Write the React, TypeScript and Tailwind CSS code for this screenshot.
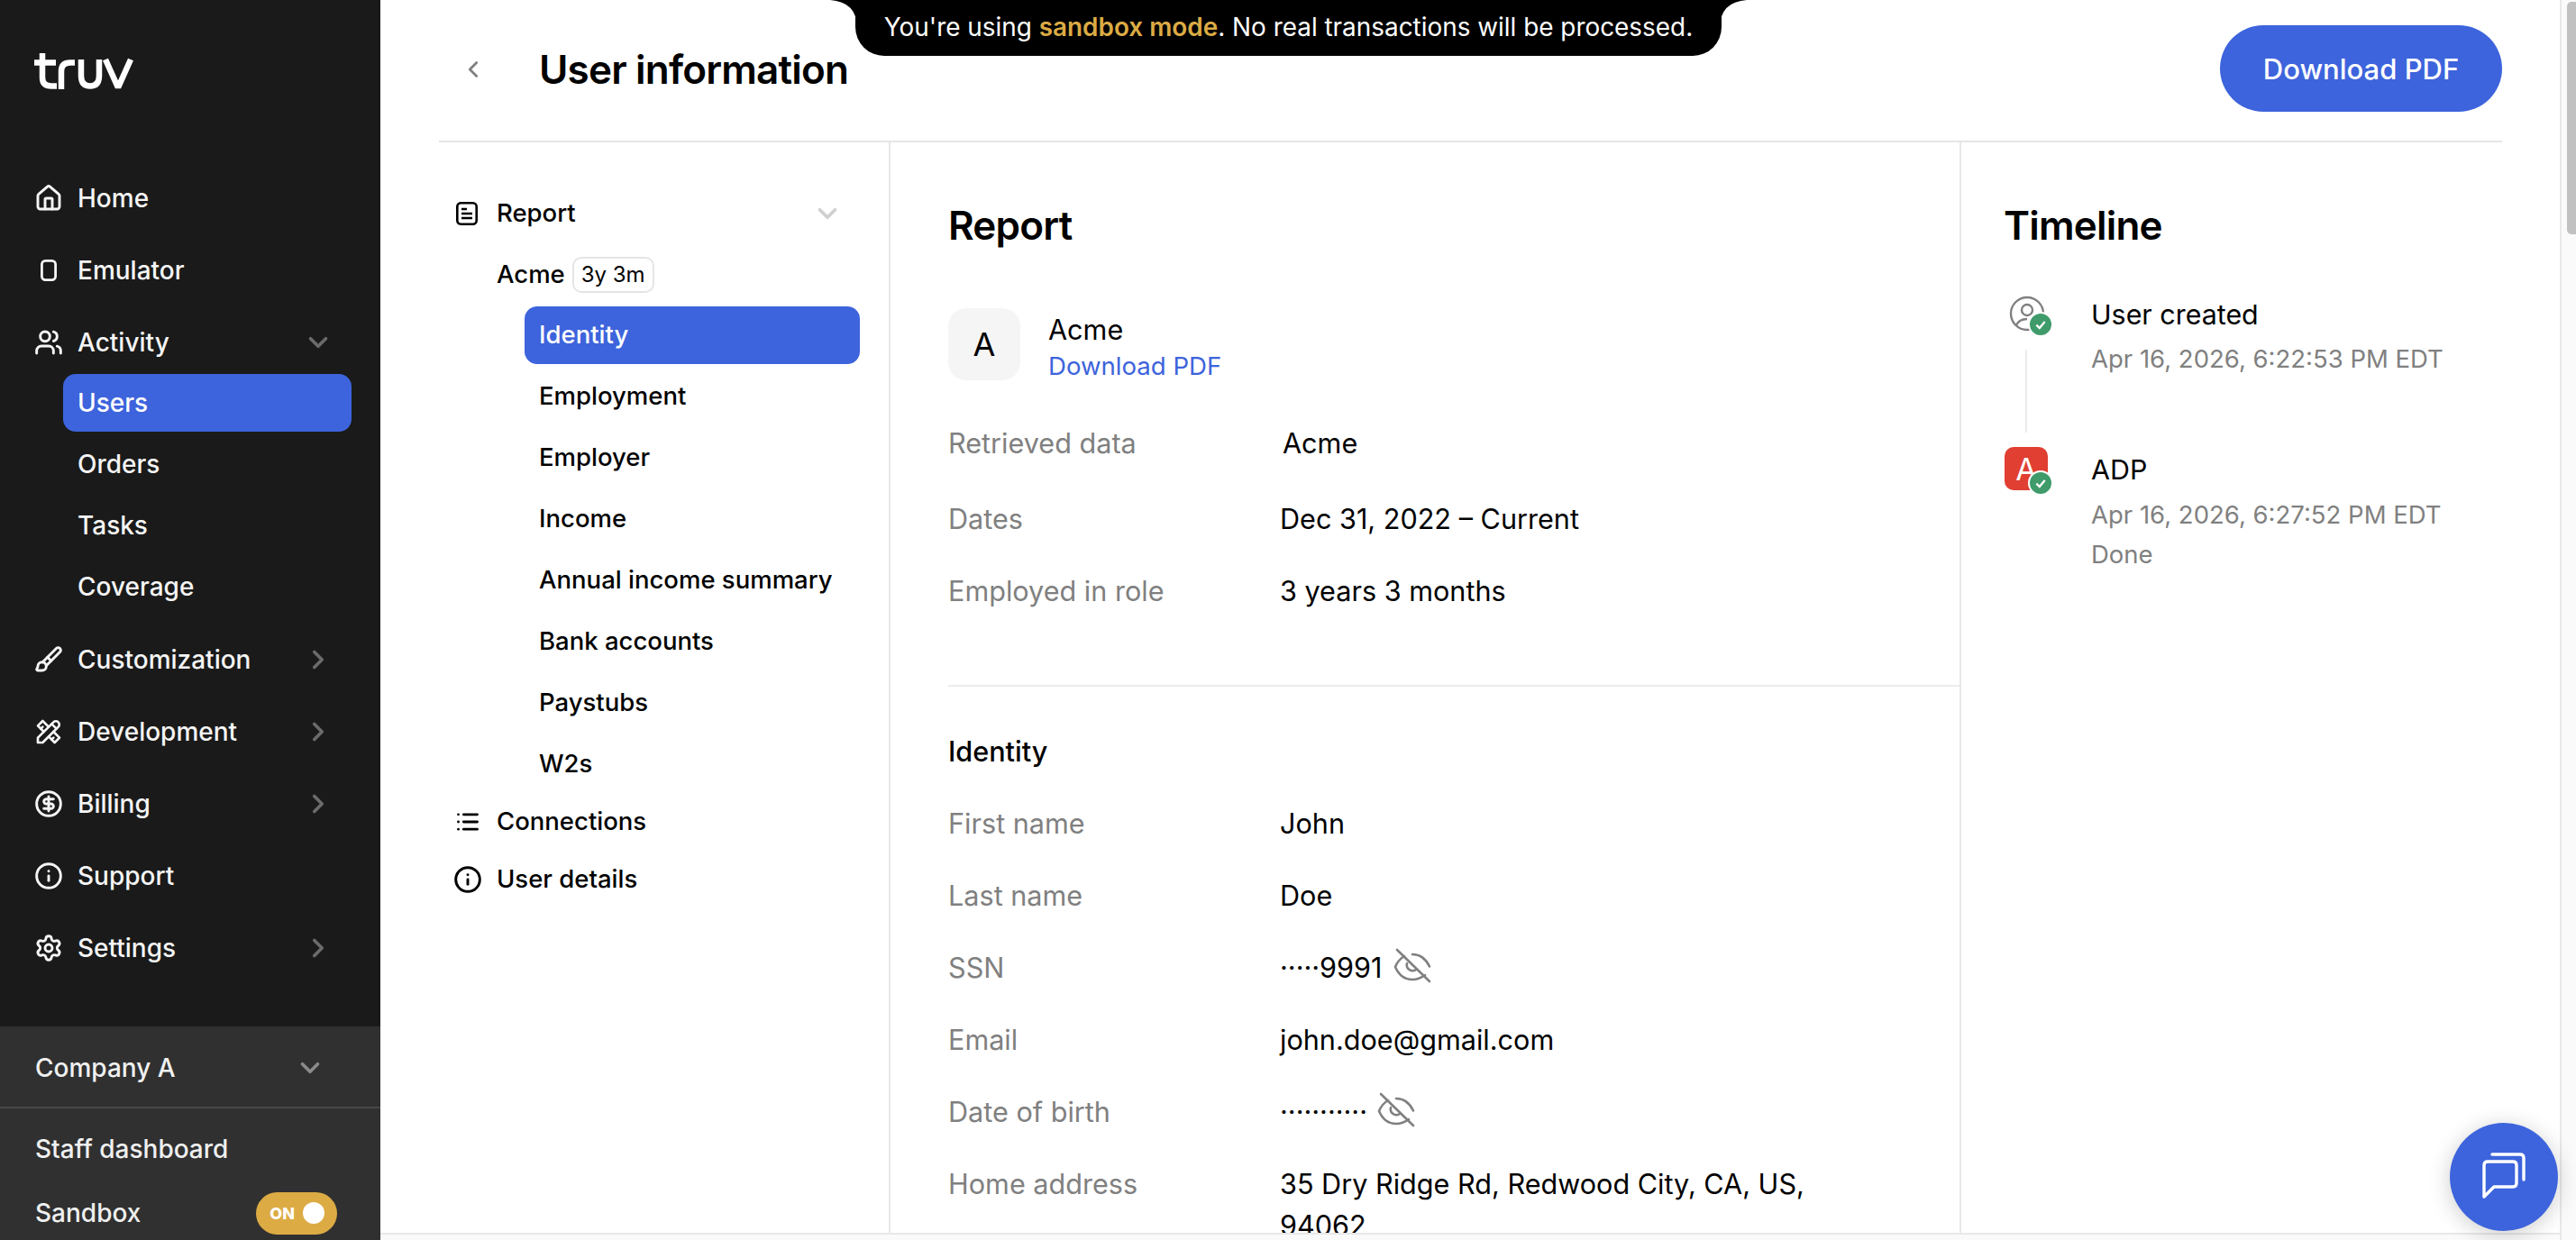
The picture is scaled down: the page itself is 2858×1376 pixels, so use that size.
import { Brush, ChevronDown, ChevronLeft, ChevronRight, CircleDollarSign, Home, Info, List, Settings, Users } from "lucide-react";
import { TbTools } from "react-icons/tb";
import type { ReactNode } from "react";

function Logo() {
  return (
    <svg viewBox="0 0 110 40" className="h-[40px] w-[110px]" fill="none" stroke="white" strokeWidth="6.5">
      <path d="M0 10.5H24M9 0V27q0 9.5 10 9.5h6" />
      <path d="M30 40V20q0-9.5 10-9.5h5" />
      <path d="M52 7V25q0 11.5 10 11.5t10-11.5V7" />
      <path d="M79 7l13 29h2l13-29" />
    </svg>
  );
}

function EyeSlash({ className = "" }: { className?: string }) {
  return (
    <svg viewBox="0 0 60 50" className={`h-[50px] w-[60px] shrink-0 ${className}`} fill="none" stroke="#808080" strokeWidth="2.6" strokeLinecap="round">
      <path d="M29 10C37 10 44 15 48 23.5" />
      <path d="M20 12C15 15 12 19 10 24C14 33 21 38 29 38C34 38 39 36 43 33" />
      <path d="M23 20A6.5 6.5 0 0 0 33 27" />
      <path d="M12 5L48 40" />
    </svg>
  );
}

function NavRow({ icon, label, chevron }: { icon: ReactNode; label: string; chevron?: "down" | "right" }) {
  return (
    <div className="flex h-[80px] items-center pl-[38px] pr-[52px] text-[28px] font-medium text-[#f5f5f5]">
      <span className="flex w-[32px] shrink-0 justify-center">{icon}</span>
      <span className="ml-[16px] flex-1">{label}</span>
      {chevron === "down" && <ChevronDown size={34} strokeWidth={2.6} className="text-[#6b6b6b]" />}
      {chevron === "right" && <ChevronRight size={34} strokeWidth={2.6} className="text-[#6b6b6b]" />}
    </div>
  );
}

function Sidebar() {
  const ic = { size: 32, strokeWidth: 2.2 };
  return (
    <aside className="flex h-full w-[422px] shrink-0 flex-col bg-[#1a1a1a]">
      <div className="pl-[38px] pt-[59px]">
        <Logo />
      </div>
      <nav className="mt-[81px] flex-1">
        <NavRow icon={<Home {...ic} />} label="Home" />
        <NavRow
          icon={
            <svg viewBox="0 0 18 24" className="h-[24px] w-[18px]" fill="none" stroke="currentColor" strokeWidth="2.8">
              <rect x="1.4" y="1.4" width="15.2" height="21.2" rx="4" />
            </svg>
          }
          label="Emulator"
        />
        <NavRow icon={<Users {...ic} />} label="Activity" chevron="down" />
        <div className="-mt-[5px] mb-[9px] flex flex-col gap-[4px] pl-[70px] pr-[32px]">
          {["Users", "Orders", "Tasks", "Coverage"].map((item) => (
            <div
              key={item}
              className={`flex h-[64px] items-center rounded-[14px] pl-[16px] text-[28px] font-medium ${
                item === "Users" ? "bg-[#3d64dc] text-white" : "text-[#f5f5f5]"
              }`}
            >
              {item}
            </div>
          ))}
        </div>
        <NavRow icon={<Brush {...ic} />} label="Customization" chevron="right" />
        <NavRow icon={<TbTools size={32} />} label="Development" chevron="right" />
        <NavRow icon={<CircleDollarSign {...ic} />} label="Billing" chevron="right" />
        <NavRow icon={<Info {...ic} />} label="Support" />
        <NavRow icon={<Settings {...ic} />} label="Settings" chevron="right" />
      </nav>
      <div className="h-[237px] bg-[#303030] text-[28px] font-medium text-[#f0f0f0]">
        <div className="flex h-[91px] items-center justify-between border-b-2 border-[#484848] pl-[39px] pr-[61px] pt-[2px]">
          <span>Company A</span>
          <ChevronDown size={34} strokeWidth={2.6} className="text-[#8a8a8a]" />
        </div>
        <div className="flex h-[90px] items-center pl-[39px]">Staff dashboard</div>
        <div className="-mt-[10px] flex h-[72px] items-center justify-between pl-[39px] pr-[48px]">
          <span>Sandbox</span>
          <span className="flex h-[47px] w-[90px] items-center justify-end gap-[9px] rounded-full bg-[#dcab44] pr-[14px]">
            <span className="text-[18px] font-extrabold text-white">ON</span>
            <span className="h-[24px] w-[24px] rounded-full bg-white" />
          </span>
        </div>
      </div>
    </aside>
  );
}

function Banner() {
  return (
    <div className="absolute left-[527px] top-0 flex h-[62px] w-[961px] items-center justify-center rounded-b-[32px] bg-black text-[27.9px] text-white">
      <svg viewBox="0 0 30 30" className="absolute -left-[28px] top-0 h-[30px] w-[30px]" fill="black">
        <path d="M0 0H30V30Q29 2 0 0Z" />
      </svg>
      <svg viewBox="0 0 30 30" className="absolute -right-[28px] top-0 h-[30px] w-[30px]" fill="black">
        <path d="M30 0H0V30Q1 2 30 0Z" />
      </svg>
      <span>
        You're using <span className="font-semibold text-[#dcab44]">sandbox mode</span>. No real transactions will be processed.
      </span>
    </div>
  );
}

function LeftMenu() {
  const subItems = ["Identity", "Employment", "Employer", "Income", "Annual income summary", "Bank accounts", "Paystubs", "W2s"];
  return (
    <div className="w-[501px] shrink-0 border-r-2 border-[#e8e8e8] pt-[45px] text-[27.5px] font-medium text-black">
      <div className="flex h-[68px] items-center pl-[19px] pr-[51px]">
        <svg viewBox="0 0 24 26" className="h-[26px] w-[24px]" fill="none" stroke="black" strokeWidth="2.6">
          <rect x="1.3" y="1.3" width="21.4" height="23.4" rx="4" />
          <path d="M6 8h6M6 13h12M6 18h12" />
        </svg>
        <span className="ml-[21px] flex-1">Report</span>
        <ChevronDown size={34} strokeWidth={2.6} className="text-[#d0d0d0]" />
      </div>
      <div className="flex h-[68px] items-center pl-[64px]">
        Acme
        <span className="ml-[8px] flex h-[40px] items-center rounded-[10px] border-2 border-[#e5e5e5] px-[8px] text-[24px] font-normal">3y 3m</span>
      </div>
      <div className="flex flex-col gap-[4px] pt-[1px]">
        {subItems.map((item) => (
          <div
            key={item}
            className={`ml-[95px] mr-[32px] flex h-[64px] items-center rounded-[14px] pl-[16px] ${
              item === "Identity" ? "bg-[#3d64dc] text-white" : ""
            }`}
          >
            {item}
          </div>
        ))}
      </div>
      <div className="flex h-[64px] items-center pl-[18px]">
        <List size={28} strokeWidth={2.4} />
        <span className="ml-[18px]">Connections</span>
      </div>
      <div className="flex h-[64px] items-center pl-[16px]">
        <Info size={32} strokeWidth={2.2} />
        <span className="ml-[16px]">User details</span>
      </div>
    </div>
  );
}

function Row({ label, children, className = "" }: { label: string; children: ReactNode; className?: string }) {
  return (
    <div className={`flex h-[80px] items-center text-[30.6px] ${className}`}>
      <span className="w-[368px] shrink-0 text-[#808080]">{label}</span>
      {children}
    </div>
  );
}

function ReportPanel() {
  return (
    <div className="min-w-0 flex-1 border-r-2 border-[#e8e8e8] pl-[64px] pt-[62px] text-black">
      <h2 className="flex h-[60px] items-center text-[44px] font-semibold tracking-[-0.8px]">Report</h2>
      <div className="mt-[62px] flex h-[80px] items-start gap-[31px]">
        <div className="flex h-[80px] w-[80px] items-center justify-center rounded-[20px] bg-[#f5f5f5] text-[36px]">A</div>
        <div className="pt-[3px]">
          <div className="text-[30.6px] leading-[41px]">Acme</div>
          <div className="text-[27.6px] leading-[41px] text-[#3d64dc]">Download PDF</div>
        </div>
      </div>
      <Row label="Retrieved data" className="mt-[30px]">
        <span className="pl-[3px]">Acme</span>
      </Row>
      <Row label="Dates" className="mt-[4px]">
        <span>Dec 31, 2022 – Current</span>
      </Row>
      <Row label="Employed in role">
        <span>3 years 3 months</span>
      </Row>
      <div className="mt-[64px] h-[2px] bg-[#ececec]" />
      <div className="mt-[52px] flex h-[40px] items-center text-[30.6px] font-medium">Identity</div>
      <Row label="First name" className="mt-[20px]">
        <span>John</span>
      </Row>
      <Row label="Last name">
        <span>Doe</span>
      </Row>
      <Row label="SSN">
        <span>·····9991</span>
        <EyeSlash className="ml-[5px]" />
      </Row>
      <Row label="Email">
        <span>john.doe@gmail.com</span>
      </Row>
      <Row label="Date of birth">
        <span>···········</span>
        <EyeSlash className="ml-[3px]" />
      </Row>
      <div className="flex pt-[17px] text-[30.6px] leading-[46px]">
        <span className="w-[368px] shrink-0 text-[#808080]">Home address</span>
        <span className="w-[640px]">35 Dry Ridge Rd, Redwood City, CA, US, 94062</span>
      </div>
    </div>
  );
}

function Badge({ className }: { className: string }) {
  return (
    <span className={`absolute flex h-[28px] w-[28px] items-center justify-center rounded-full border-2 border-white bg-[#3f9b6a] ${className}`}>
      <svg viewBox="0 0 12 12" className="h-[14px] w-[14px]" fill="none" stroke="white" strokeWidth="2">
        <path d="M2 6.5l3 3 5-6" />
      </svg>
    </span>
  );
}

function Timeline() {
  return (
    <div className="w-[600px] shrink-0 pl-[48px] pt-[62px] text-black">
      <h2 className="-ml-[1px] flex h-[60px] items-center text-[44px] font-semibold tracking-[-0.8px]">Timeline</h2>
      <div className="relative mt-[46px]">
        <div className="absolute left-[23px] top-[62px] h-[92px] w-[2px] bg-[#ececec]" />
        <div className="flex">
          <div className="relative h-[48px] w-[48px]">
            <svg viewBox="0 0 40 40" className="ml-[5px] mt-[2px] h-[40px] w-[40px]" fill="none" stroke="#808080" strokeWidth="2.4">
              <circle cx="20" cy="20" r="18" />
              <circle cx="20" cy="16" r="6" />
              <path d="M8 33q3-7 12-7" />
            </svg>
            <Badge className="left-[26px] top-[20px]" />
          </div>
          <div className="ml-[48px] pt-[2px]">
            <div className="text-[30.4px] leading-[42px]">User created</div>
            <div className="mt-[7px] text-[27.5px] leading-[42px] text-[#808080]">Apr 16, 2026, 6:22:53 PM EDT</div>
          </div>
        </div>
        <div className="mt-[77px] flex">
          <div className="relative flex h-[48px] w-[48px] items-center justify-center rounded-[10px] bg-[#e03f32] text-[34px] text-white">
            A
            <Badge className="left-[26px] top-[26px]" />
          </div>
          <div className="ml-[48px]">
            <div className="text-[30.4px] leading-[50px]">ADP</div>
            <div className="mt-[3px] text-[27.5px] leading-[44px] text-[#808080]">Apr 16, 2026, 6:27:52 PM EDT</div>
            <div className="text-[27.5px] leading-[44px] text-[#808080]">Done</div>
          </div>
        </div>
      </div>
    </div>
  );
}

export default function App() {
  return (
    <div className="flex h-[1376px] w-[2858px] overflow-hidden bg-white font-['Inter',sans-serif]">
      <Sidebar />
      <div className="relative flex min-w-0 flex-1">
        <div className="flex min-w-0 flex-1 flex-col">
          <main className="flex min-h-0 flex-1 flex-col overflow-hidden pl-[65px] pr-[64px]">
            <header className="flex h-[158px] shrink-0 items-center justify-between border-b-2 border-[#e5e5e5] pb-[4px]">
              <div className="flex items-center pt-[2px]">
                <ChevronLeft size={30} strokeWidth={2.2} className="ml-[23px] text-[#808080]" />
                <h1 className="ml-[58px] text-[44px] font-semibold tracking-[-0.8px] text-black">User information</h1>
              </div>
              <button className="flex h-[96px] w-[313px] items-center justify-center rounded-full bg-[#3d64dc] pt-[2px] text-[31px] font-medium text-white">
                Download PDF
              </button>
            </header>
            <div className="flex min-h-0 flex-1">
              <LeftMenu />
              <ReportPanel />
              <Timeline />
            </div>
          </main>
          <div className="h-[8px] shrink-0 border-t-2 border-[#e8e8e8] bg-[#fafafa]" />
        </div>
        <div className="w-[18px] shrink-0 border-l-2 border-[#e8e8e8] bg-[#fafafa] pl-[6px] pt-[2px]">
          <div className="h-[258px] w-[10px] rounded-l-[5px] bg-[#c1c1c1]" />
        </div>
        <Banner />
        <button className="absolute left-[2296px] top-[1246px] flex h-[120px] w-[120px] items-center justify-center rounded-full bg-[#3d64dc] shadow-[0_4px_24px_rgba(0,0,0,0.2)]">
          <svg viewBox="0 0 60 60" className="h-[60px] w-[60px]" fill="none" stroke="white" strokeWidth="3.4" strokeLinecap="round" strokeLinejoin="round">
            <path d="M8 17q0-4 4-4h28q4 0 4 4v20q0 4-4 4H19L8 52Z" />
            <path d="M17 5h31q4 0 4 4v24" />
          </svg>
        </button>
      </div>
    </div>
  );
}
